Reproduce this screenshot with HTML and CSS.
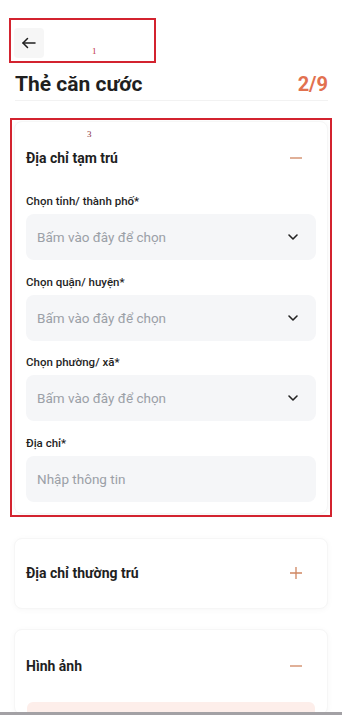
FILE: index.html
```html
<!DOCTYPE html>
<html lang="vi">
<head>
<meta charset="utf-8">
<title>Thẻ căn cước</title>
<link rel="stylesheet" href="styles.css">
</head>
<body>
<div class="page">
  <div class="topbar">
    <button class="back" aria-label="Quay lại">
      <svg width="18" height="18" viewBox="0 0 24 24" fill="none" stroke="#1f1f1f" stroke-width="2" stroke-linecap="round" stroke-linejoin="round"><path d="M20 12H4"/><path d="M10 6l-6 6 6 6"/></svg>
    </button>
  </div>
  <div class="title-row">
    <h1 class="title">Thẻ căn cước</h1>
    <span class="step">2/9</span>
  </div>

  <section class="card">
    <div class="card-head">
      <span class="card-title">Địa chỉ tạm trú</span>
      <svg class="toggle" width="14" height="14" viewBox="0 0 14 14"><path d="M1 7h12" stroke="#cf8661" stroke-width="1.3"/></svg>
    </div>
    <div class="field">
      <label class="label">Chọn tỉnh/ thành phố*</label>
      <div class="input select"><span>Bấm vào đây để chọn</span>
        <svg width="14" height="14" viewBox="0 0 14 14" fill="none" stroke="#222" stroke-width="1.6" stroke-linecap="round" stroke-linejoin="round"><path d="M3 5l4 4 4-4"/></svg>
      </div>
    </div>
    <div class="field">
      <label class="label">Chọn quận/ huyện*</label>
      <div class="input select"><span>Bấm vào đây để chọn</span>
        <svg width="14" height="14" viewBox="0 0 14 14" fill="none" stroke="#222" stroke-width="1.6" stroke-linecap="round" stroke-linejoin="round"><path d="M3 5l4 4 4-4"/></svg>
      </div>
    </div>
    <div class="field">
      <label class="label">Chọn phường/ xã*</label>
      <div class="input select"><span>Bấm vào đây để chọn</span>
        <svg width="14" height="14" viewBox="0 0 14 14" fill="none" stroke="#222" stroke-width="1.6" stroke-linecap="round" stroke-linejoin="round"><path d="M3 5l4 4 4-4"/></svg>
      </div>
    </div>
    <div class="field">
      <label class="label">Địa chỉ*</label>
      <div class="input"><span>Nhập thông tin</span></div>
    </div>
  </section>

  <section class="card card-closed">
    <div class="card-head">
      <span class="card-title">Địa chỉ thường trú</span>
      <svg class="toggle" width="14" height="14" viewBox="0 0 14 14"><path d="M1 7h12M7 1v12" stroke="#cf8661" stroke-width="1.3"/></svg>
    </div>
  </section>

  <section class="card card-images">
    <div class="card-head">
      <span class="card-title">Hình ảnh</span>
      <svg class="toggle" width="14" height="14" viewBox="0 0 14 14"><path d="M1 7h12" stroke="#cf8661" stroke-width="1.3"/></svg>
    </div>
    <div class="photo-area"></div>
  </section>
</div>

<div class="mark mark-1"><span class="mark-num num-1">1</span></div>
<div class="mark mark-3"><span class="mark-num num-3">3</span></div>
<div class="bottom-edge"></div>
</body>
</html>
```

FILE: styles.css
```css
* { box-sizing: border-box; }
html, body { margin: 0; padding: 0; background: #fff; }
body {
  font-family: Roboto, "Noto Sans", "Liberation Sans", sans-serif;
  color: #1f1f1f;
  width: 342px;
  height: 715px;
  overflow: hidden;
  position: relative;
}
.page { display: flex; flex-direction: column; }

.topbar { padding: 28px 14px 0; height: 58px; }
.back {
  width: 30px; height: 30px;
  border: 0; border-radius: 4px;
  background: #f6f6f6;
  display: flex; align-items: center; justify-content: center;
  padding: 0; margin: 0;
}

.title-row {
  display: flex; justify-content: space-between; align-items: center;
  margin: 12px 14px 0 15px;
  height: 31px;
  border-bottom: 1px solid #f2f2f2;
  padding-bottom: 2px;
}
.title { margin: 0; font-size: 21px; font-weight: 700; line-height: 28px; color: #1f1f1f; }
.step { font-size: 20px; font-weight: 700; color: #e2714f; line-height: 28px; }

.card {
  margin: 0 14px;
  background: #fff;
  border-radius: 8px;
  border: 1px solid #f6f6f6;
  box-shadow: 0 1px 6px rgba(0, 0, 0, 0.035);
  padding: 0 11px 11px;
}
.page > .card:nth-of-type(1) { margin-top: 20px; }
.card-closed { margin-top: 24px; padding-bottom: 0; }
.card-images { margin-top: 20px; padding-bottom: 0; }

.card-head {
  height: 71px;
  display: flex; align-items: center; justify-content: space-between;
  padding-right: 13px;
}
.card-closed .card-head { height: 69px; }
.card-images .card-head { height: 72px; }
.card-title { font-size: 14px; font-weight: 700; color: #1f1f1f; }

.field + .field { margin-top: 13.5px; }
.label {
  display: block;
  font-size: 11.5px; font-weight: 500; line-height: 16px;
  color: #1f1f1f;
  margin-bottom: 5px;
}
.input {
  height: 46px;
  background: #f5f6f8;
  border-radius: 8px;
  display: flex; align-items: center; justify-content: space-between;
  padding: 0 16px 0 11px;
  font-size: 13.5px; color: #9ba0a7;
}

.photo-area {
  height: 12px;
  margin: 0 1px;
  background: #fdeeea;
  border-radius: 6px 6px 0 0;
}

.mark {
  position: absolute;
  border: 2px solid #d3232f;
}
.mark-1 { left: 9px; top: 18px; width: 147px; height: 45px; }
.mark-3 { left: 10px; top: 118px; width: 322px; height: 399px; }
.mark-num {
  position: absolute;
  font-family: "Liberation Serif", serif;
  font-size: 9px;
  color: #c0303a;
  line-height: 10px;
}
.num-1 { left: 81px; top: 26px; }
.num-3 { left: 75px; top: 9px; color: #8a3040; }

.bottom-edge {
  position: absolute; left: 0; right: 0; bottom: 0;
  height: 3px;
  background: #a3a1a5;
}
```
